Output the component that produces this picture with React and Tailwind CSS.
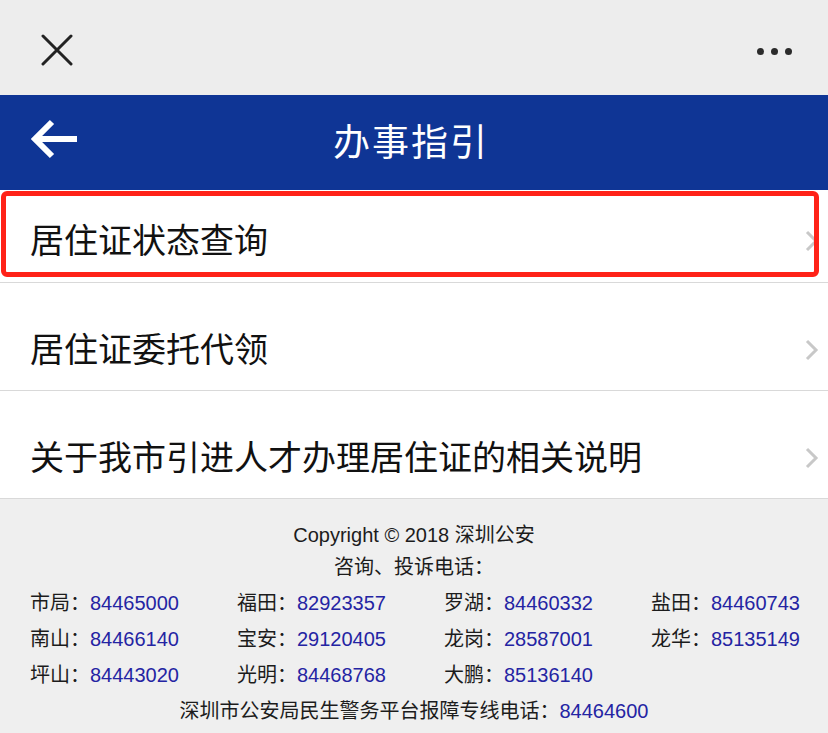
const FONT = { fontFamily: "'Liberation Sans', 'Noto Sans CJK SC', sans-serif" };

const rows = [
  { title: "居住证状态查询", first: true },
  { title: "居住证委托代领" },
  { title: "关于我市引进人才办理居住证的相关说明" },
];

const phones = [
  ["市局", "84465000"],
  ["福田", "82923357"],
  ["罗湖", "84460332"],
  ["盐田", "84460743"],
  ["南山", "84466140"],
  ["宝安", "29120405"],
  ["龙岗", "28587001"],
  ["龙华", "85135149"],
  ["坪山", "84443020"],
  ["光明", "84468768"],
  ["大鹏", "85136140"],
];

function Chevron() {
  return (
    <svg width="16" height="24" viewBox="0 0 16 24" className="shrink-0">
      <path d="M3 3 L12 12 L3 21" fill="none" stroke="#c8c8c8" strokeWidth="3" />
    </svg>
  );
}

export default function App() {
  return (
    <div className="w-[828px] h-[733px] bg-white overflow-hidden relative" style={FONT}>
      {/* wechat top bar */}
      <div className="h-[95px] bg-[#ededed] flex items-center justify-between pl-[40px] pr-[36px]">
        <svg width="34" height="32" viewBox="0 0 34 32" className="mt-[4px]">
          <path d="M3 2 L31 30 M31 2 L3 30" stroke="#222" strokeWidth="3" strokeLinecap="round" />
        </svg>
        <div className="flex items-center gap-[7px] mt-[8px]">
          <span className="w-[7px] h-[7px] rounded-full bg-[#2b2b2b]" />
          <span className="w-[7px] h-[7px] rounded-full bg-[#2b2b2b]" />
          <span className="w-[7px] h-[7px] rounded-full bg-[#2b2b2b]" />
        </div>
      </div>

      {/* page header */}
      <div className="h-[95px] bg-[#0f3595] flex items-center relative">
        <svg width="52" height="44" viewBox="0 0 52 44" className="absolute left-[28px] top-[22px]">
          <path d="M49 22 H8 M24 5 L7 22 L24 39" fill="none" stroke="#fff" strokeWidth="6" />
        </svg>
        <p className="w-full text-center text-white text-[37px] tracking-[2px] pt-[2px] pr-[6px]">办事指引</p>
      </div>

      {/* list */}
      <div>
        {rows.map((r) => (
          <div
            key={r.title}
            className={`flex items-center justify-between pl-[30px] pr-[8px] border-b border-[#d9d9d9] ${
              r.first ? "h-[93px] pt-[10px]" : "h-[108px] pt-[26px]"
            }`}
          >
            <span className="text-[34px] text-[#111] leading-none">{r.title}</span>
            <Chevron />
          </div>
        ))}
      </div>

      {/* highlight annotation */}
      <div className="absolute left-[1px] top-[191px] w-[818px] h-[86px] border-[5px] border-[#ff2218] rounded-[6px]" />

      {/* footer */}
      <div className="bg-[#efefef] h-[236px] pt-[20px] text-[20px] text-[#1c1c1c]">
        <p className="text-center leading-[32px]">Copyright © 2018 深圳公安</p>
        <p className="text-center leading-[32px]">咨询、投诉电话：</p>
        <div className="grid grid-cols-4 mt-[2px]">
          {phones.map(([area, num]) => (
            <p key={area} className="pl-[30px] leading-[36px] whitespace-nowrap">
              {area}：<span className="text-[#2424a3]">{num}</span>
            </p>
          ))}
        </div>
        <p className="text-center leading-[36px]">
          深圳市公安局民生警务平台报障专线电话：<span className="text-[#2424a3]">84464600</span>
        </p>
      </div>
    </div>
  );
}
